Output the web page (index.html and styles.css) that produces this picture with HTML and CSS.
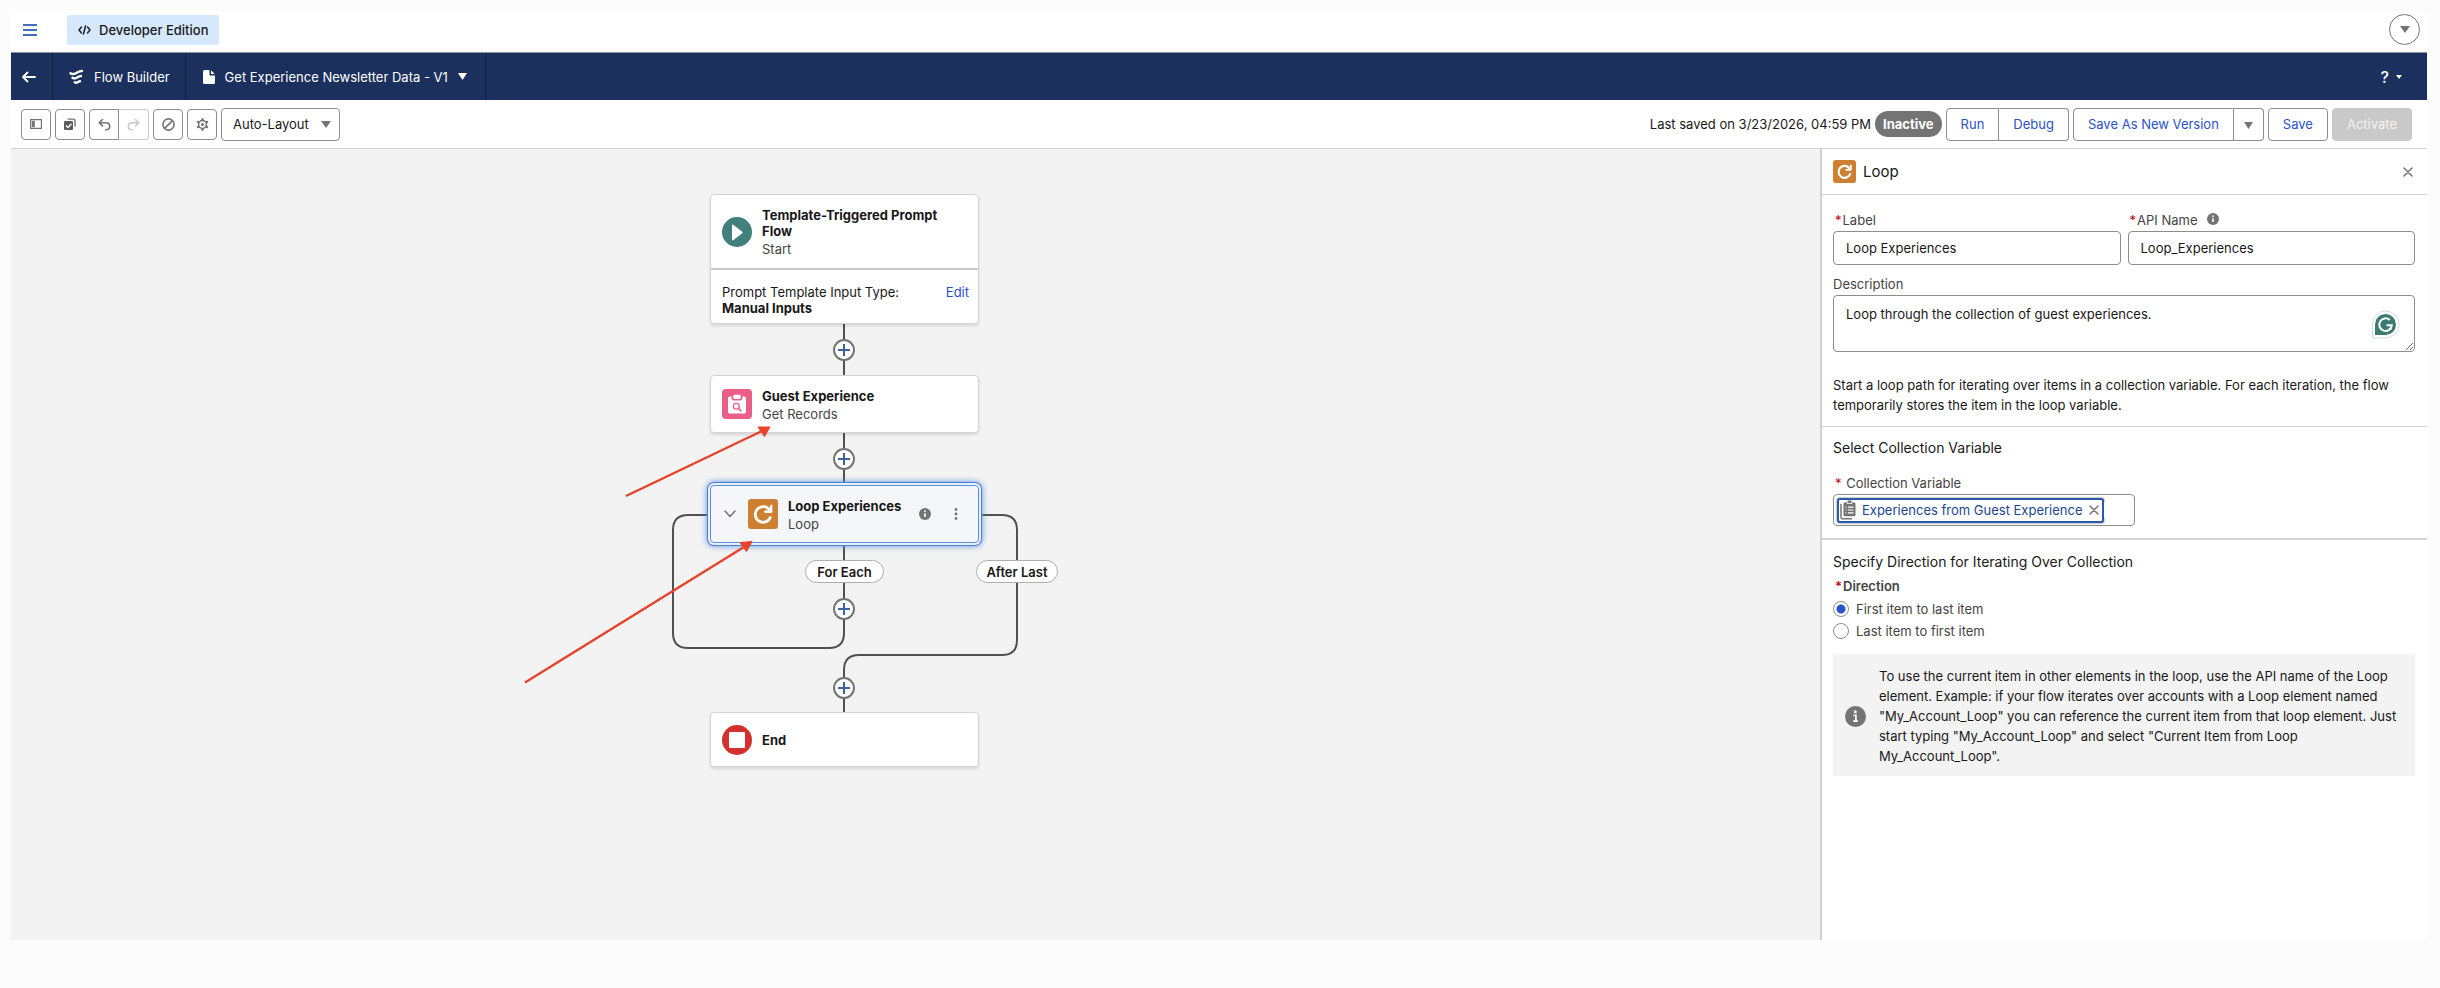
FILE: index.html
```html
<!DOCTYPE html>
<html lang="en">
<head>
  <meta charset="UTF-8">
  <title>Flow Builder</title>
  <link rel="stylesheet" href="styles.css">
</head>
<body>
  <div class="app">
    <div class="topbar">
      <button class="plain menu-button" aria-label="Menu">
        <svg width="14" height="12" viewBox="0 0 14 12"><path d="M0 1h14M0 6h14M0 11h14" stroke="#3f6fbd" stroke-width="2"/></svg>
      </button>
      <span class="edition">
        <svg width="13" height="10" viewBox="0 0 13 10" fill="none" stroke="#222" stroke-width="1.5" stroke-linecap="round" stroke-linejoin="round"><path d="M3.5 2L1 5l2.500 3M9.500 2L12 5l-2.500 3M7.500 1L5.500 9"/></svg>
        Developer Edition
      </span>
      <button class="user-menu" aria-label="User menu">
        <svg width="10" height="7" viewBox="0 0 10 7"><path d="M0 0h10L5 7z" fill="#747474"/></svg>
      </button>
    </div>

    <header class="nav">
      <a href="#" class="nav-item nav-back" aria-label="Back">
        <svg width="14" height="12" viewBox="0 0 14 12" fill="none" stroke="#fff" stroke-width="1.800" stroke-linecap="round" stroke-linejoin="round"><path d="M13 6H1.500M5.500 1.500L1 6l4.500 4.500"/></svg>
      </a>
      <div class="nav-item nav-app">
        <svg width="15" height="16" viewBox="0 0 15 16" fill="none" stroke="#fff" stroke-width="2.400" stroke-linecap="round"><path d="M1.500 4.200c2 1.600 3.600 1 5.500 0s3.500-2.300 6-2.200M3.500 8.700c1.400 1.100 2.700.8 4.100 0S10.400 7 12 7M5.800 13.200c1 .8 2 .6 3 0s1.400-1 2.200-1"/></svg>
        Flow Builder
      </div>
      <button class="nav-item nav-flow">
        <svg width="12" height="14" viewBox="0 0 12 14" fill="#fff"><path d="M1.500 0H6.500v4.500c0 .6.4 1 1 1H12v7c0 .8-.7 1.500-1.500 1.500h-9C.7 14 0 13.300 0 12.500v-11C0 .7.7 0 1.500 0z"/><path d="M8 .3L11.700 4H8.500c-.3 0-.5-.2-.5-.5z"/></svg>
        Get Experience Newsletter Data - V1
        <svg class="caret" width="9" height="7" viewBox="0 0 9 7"><path d="M0 0h9L4.500 7z" fill="#fff"/></svg>
      </button>
      <button class="nav-help" aria-label="Help">
        <span>?</span>
        <svg width="6" height="4" viewBox="0 0 6 4"><path d="M0 0h6L3 4z" fill="#fff"/></svg>
      </button>
    </header>

    <div class="toolbar">
      <button class="icon-button" aria-label="Toggle toolbox">
        <svg width="12" height="10" viewBox="0 0 12 10"><path d="M.6.600h10.800v8.800H.600z" fill="none" stroke="#747474" stroke-width="1.200"/><path d="M1.800 1.800h3v6.400h-3z" fill="#747474"/></svg>
      </button>
      <button class="icon-button" aria-label="Select elements">
        <svg width="12" height="12" viewBox="0 0 12 12"><path d="M3.500 1.100h6c.9 0 1.500.6 1.500 1.500v6" fill="none" stroke="#747474" stroke-width="1.400"/><rect y="3" width="9" height="9" rx="1.200" fill="#5c5c5c"/><path d="M2 7.500l2 2 3.500-3.700" fill="none" stroke="#fff" stroke-width="1.300"/></svg>
      </button>
      <div class="button-group">
        <button class="icon-button" aria-label="Undo">
          <svg width="13" height="13" viewBox="0 0 13 13" fill="none" stroke="#747474" stroke-width="1.600" stroke-linecap="round" stroke-linejoin="round"><path d="M4.500 1.500L1.200 4.700l3.300 3.200M1.500 4.700h6.200c2.400 0 4 1.500 4 3.500s-1.500 3.600-4 3.600"/></svg>
        </button>
        <button class="icon-button" aria-label="Redo" disabled>
          <svg width="13" height="13" viewBox="0 0 13 13" fill="none" stroke="#c9c9c9" stroke-width="1.600" stroke-linecap="round" stroke-linejoin="round"><path d="M8.500 1.500l3.300 3.200-3.300 3.200M11.500 4.700H5.300c-2.400 0-4 1.500-4 3.500s1.500 3.600 4 3.600"/></svg>
        </button>
      </div>
      <button class="icon-button" aria-label="Disable">
        <svg width="13" height="13" viewBox="0 0 13 13" fill="none" stroke="#747474" stroke-width="1.600"><circle cx="6.500" cy="6.500" r="5.600"/><path d="M10.400 2.600l-7.800 7.800"/></svg>
      </button>
      <button class="icon-button" aria-label="Settings">
        <svg width="13" height="13" viewBox="0 0 13 13" fill="none" stroke="#747474"><circle cx="6.500" cy="6.500" r="3.900" stroke-width="1.500"/><circle cx="6.500" cy="6.500" r="1.500" fill="#747474" stroke="none"/><path d="M6.500.300v2.400M6.500 10.300v2.400M1.100 3.400l2.100 1.200M9.800 8.400l2.100 1.200M1.100 9.600l2.100-1.200M9.800 4.600l2.100-1.200" stroke-width="2.300"/></svg>
      </button>
      <span class="select-wrap">
        <select aria-label="Layout mode">
          <option>Auto-Layout</option>
          <option>Free-Form</option>
        </select>
        <svg width="10" height="7" viewBox="0 0 10 7"><path d="M0 0h10L5 7z" fill="#747474"/></svg>
      </span>

      <div class="toolbar-right">
        <span class="saved">Last saved on 3/23/2026, 04:59 PM</span>
        <span class="status">Inactive</span>
        <div class="button-group">
          <button class="button">Run</button>
          <button class="button">Debug</button>
        </div>
        <div class="button-group">
          <button class="button">Save As New Version</button>
          <button class="button button-caret" aria-label="More save options">
            <svg width="9" height="7" viewBox="0 0 9 7"><path d="M0 0h9L4.500 7z" fill="#747474"/></svg>
          </button>
        </div>
        <button class="button">Save</button>
        <button class="button" disabled>Activate</button>
      </div>
    </div>

    <div class="workspace">
      <main class="canvas">
        <svg class="connectors" width="1100" height="640" viewBox="0 0 1100 640" fill="none" stroke="#515151" stroke-width="2">
          <path d="M833 174v54M833 283v52M833 393v91q0 15-15 15H677q-15 0-15-15V381q0-15 15-15H700"/>
          <path d="M966 366h25q15 0 15 15v110q0 15-15 15H848q-15 0-15 15v43"/>
        </svg>

        <div class="node start">
          <div class="node-head">
            <svg width="30" height="30" viewBox="0 0 30 30"><circle cx="15" cy="15" r="15" fill="#41807c"/><path d="M10 8.500c0-1 .5-1.200 1.200-.7l9 7c.6.500.6.900 0 1.400l-9 7c-.7.500-1.200.3-1.200-.7z" fill="#fff"/></svg>
            <div class="node-text">
              <h2>Template-Triggered Prompt Flow</h2>
              <p>Start</p>
            </div>
          </div>
          <div class="node-detail">
            <div>Prompt Template Input Type:<br><b>Manual Inputs</b></div>
            <a href="#">Edit</a>
          </div>
        </div>

        <div class="node get-records">
          <div class="node-head">
            <svg width="30" height="30" viewBox="0 0 30 30"><rect width="30" height="30" rx="4" fill="#ea5f8a"/><path d="M7.800 7.500h1.700v1.300c0 1.700 1.100 2.800 2.800 2.800h5.400c1.700 0 2.800-1.100 2.800-2.800V7.500h1.700c1 0 1.800.8 1.800 1.800v13.400c0 1-.8 1.800-1.800 1.800H7.800c-1 0-1.800-.8-1.800-1.800V9.300c0-1 .8-1.800 1.800-1.800z" fill="#fff"/><path d="M12.500 5.800h5c.7 0 1.200.5 1.200 1.200v1.800c0 .7-.5 1.200-1.200 1.200h-5c-.7 0-1.200-.5-1.200-1.200V7c0-.7.5-1.200 1.200-1.200z" fill="#fff"/><circle cx="14.300" cy="17.200" r="2.900" fill="none" stroke="#ea5f8a" stroke-width="1.300"/><path d="M16.500 19.400l2.500 2.500" stroke="#ea5f8a" stroke-width="1.500" stroke-linecap="round"/></svg>
            <div class="node-text">
              <h2>Guest Experience</h2>
              <p>Get Records</p>
            </div>
          </div>
        </div>

        <div class="node loop">
          <div class="node-head">
            <button class="plain" aria-label="Collapse"><svg width="12" height="8" viewBox="0 0 12 8" fill="none" stroke="#747474" stroke-width="1.500" stroke-linecap="round" stroke-linejoin="round"><path d="M1 1l5 5.500L11 1"/></svg></button>
            <svg width="30" height="30" viewBox="0 0 30 30"><rect width="30" height="30" rx="3" fill="#cd8032"/><path d="M22.300 18.500a7.800 7.800 0 1 1-.6-7.200" fill="none" stroke="#fff" stroke-width="2.800" stroke-linecap="round"/><path d="M23.200 7v5.800H17.300" fill="none" stroke="#fff" stroke-width="2.400" stroke-linecap="round" stroke-linejoin="round"/></svg>
            <div class="node-text">
              <h2>Loop Experiences</h2>
              <p>Loop</p>
            </div>
            <svg width="12" height="12" viewBox="0 0 12 12"><circle cx="6" cy="6" r="6" fill="#747474"/><path d="M6 2.400v1.500M6 5.200V9" stroke="#fff" stroke-width="1.600"/></svg>
            <button class="plain" aria-label="Element actions"><svg width="4" height="12" viewBox="0 0 4 12" fill="#747474"><circle cx="2" cy="1.500" r="1.400"/><circle cx="2" cy="6" r="1.400"/><circle cx="2" cy="10.500" r="1.400"/></svg></button>
          </div>
        </div>

        <div class="node end">
          <div class="node-head">
            <svg width="30" height="30" viewBox="0 0 30 30"><circle cx="15" cy="15" r="15" fill="#d4302f"/><rect x="7" y="7" width="16" height="16" rx="1" fill="#fff"/></svg>
            <h2>End</h2>
          </div>
        </div>

        <span class="branch for-each">For Each</span>
        <span class="branch after-last">After Last</span>

        <button class="add add-1" aria-label="Add element"></button>
        <button class="add add-2" aria-label="Add element"></button>
        <button class="add add-3" aria-label="Add element"></button>
        <button class="add add-4" aria-label="Add element"></button>

        <svg class="arrows" width="1100" height="640" viewBox="0 0 1100 640" fill="#e8432a" stroke="#e8432a" stroke-width="2.400">
          <path d="M615 347l136-65M514 533.500L733 398"/>
          <path d="M759 278h-12l6.500 9.500zM741 392.500l-12 1 6.500 9z" stroke-width="1"/>
        </svg>
      </main>

      <aside class="panel">
        <div class="panel-head">
          <svg width="23" height="23" viewBox="0 0 30 30"><rect width="30" height="30" rx="4" fill="#cd8032"/><path d="M22.300 18.500a7.800 7.800 0 1 1-.6-7.200" fill="none" stroke="#fff" stroke-width="2.800" stroke-linecap="round"/><path d="M23.200 7v5.800H17.300" fill="none" stroke="#fff" stroke-width="2.400" stroke-linecap="round" stroke-linejoin="round"/></svg>
          <h2>Loop</h2>
          <button class="plain" aria-label="Close"><svg width="10" height="10" viewBox="0 0 10 10" stroke="#747474" stroke-width="1.500" stroke-linecap="round"><path d="M1 1l8 8M9 1L1 9"/></svg></button>
        </div>

        <div class="section general">
          <div class="field-row">
            <div class="field">
              <label for="label"><i>*</i>Label</label>
              <input type="text" id="label" value="Loop Experiences">
            </div>
            <div class="field">
              <label for="api-name"><i>*</i>API Name
                <svg class="info" width="12" height="12" viewBox="0 0 12 12"><circle cx="6" cy="6" r="6" fill="#747474"/><path d="M6 2.400v1.500M6 5.200V9" stroke="#fff" stroke-width="1.600"/></svg>
              </label>
              <input type="text" id="api-name" value="Loop_Experiences">
            </div>
          </div>
          <div class="field description">
            <label for="description">Description</label>
            <textarea id="description">Loop through the collection of guest experiences.</textarea>
            <svg class="grammar" width="29" height="29" viewBox="0 0 29 29"><path d="M14.500 1A13.500 13.500 0 1 1 14.500 28H1.500V14A13.500 13.500 0 0 1 14.500 1z" fill="#fff" stroke="#d5dae3"/><path d="M14.500 4A10.500 10.500 0 1 1 14.500 25H4V14.500A10.500 10.500 0 0 1 14.500 4z" fill="#3c7b70"/><path d="M18.800 10a6.300 6.300 0 1 0 2 5.200H15.500M20.800 15.200l-1.300 4.300" fill="none" stroke="#fff" stroke-width="2"/></svg>
          </div>
          <p class="intro">Start a loop path for iterating over items in a collection variable. For each iteration, the flow temporarily stores the item in the loop variable.</p>
        </div>

        <div class="section collection">
          <h3>Select Collection Variable</h3>
          <label for="collection"><i>*</i> Collection Variable</label>
          <div class="combo">
            <button class="resource">
              <svg width="16" height="20" viewBox="0 0 16 20"><path d="M1 4v13.500c0 .8.5 1.300 1.300 1.300H12" fill="none" stroke="#747474" stroke-width="1.500"/><path d="M5 2.500h2V4h5V2.500h2c.8 0 1.500.6 1.500 1.400v11c0 .8-.7 1.400-1.500 1.400H5c-.8 0-1.500-.6-1.500-1.400v-11c0-.8.7-1.400 1.500-1.400z" fill="#747474"/><path d="M7.500.500h4v2.700h-4z" fill="#747474"/><path d="M5.500 7.200h1M8 7.200h5.500M5.500 10h1M8 10h5.500M5.500 12.800h1M8 12.800h5.500" stroke="#fff" stroke-width="1.200"/></svg>
              Experiences from Guest Experience
              <svg class="remove" width="10" height="10" viewBox="0 0 10 10" stroke="#747474" stroke-width="1.500" stroke-linecap="round"><path d="M1 1l8 8M9 1L1 9"/></svg>
            </button>
            <input type="text" id="collection">
          </div>
        </div>

        <div class="section direction">
          <h3>Specify Direction for Iterating Over Collection</h3>
          <fieldset>
            <legend><i>*</i>Direction</legend>
            <label><input type="radio" name="direction" checked>First item to last item</label>
            <label><input type="radio" name="direction">Last item to first item</label>
          </fieldset>
          <div class="notice">
            <svg width="21" height="21" viewBox="0 0 21 21"><circle cx="10.500" cy="10.500" r="10.500" fill="#747474"/><circle cx="10.300" cy="5.800" r="1.500" fill="#fff"/><path d="M8.500 9.300h2.400v5.500M8.200 15.200h4.800" fill="none" stroke="#fff" stroke-width="1.700"/></svg>
            <p>To use the current item in other elements in the loop, use the API name of the Loop element. Example: if your flow iterates over accounts with a Loop element named "My_Account_Loop" you can reference the current item from that loop element. Just start typing "My_Account_Loop" and select "Current Item from Loop My_Account_Loop".</p>
          </div>
        </div>
      </aside>
    </div>
  </div>
</body>
</html>
```
FILE: styles.css
```css
* {
  margin: 0;
  padding: 0;
  box-sizing: border-box;
}

body {
  min-height: 100vh;
  padding: 11px 13px 48px 11px;
  background: #fcfcfc;
  color: #181818;
  font-family: Inter, "Liberation Sans", sans-serif;
  font-size: 13px;
  line-height: 16px;
  display: flex;
}

button,
input,
select,
textarea {
  font: inherit;
  color: inherit;
}

button {
  cursor: pointer;
}

svg {
  flex: none;
}

a {
  color: #2a52cc;
  text-decoration: none;
}

.app {
  flex: 1;
  min-width: 0;
  display: flex;
  flex-direction: column;
  background: #fff;
}

.plain {
  border: none;
  background: none;
  display: flex;
}

/* Top bar */
.topbar {
  height: 42px;
  display: flex;
  align-items: center;
  padding: 0 7px 4px 12px;
  border-bottom: 1px solid #8d9299;
}

.edition {
  display: flex;
  align-items: center;
  gap: 8px;
  height: 30px;
  margin: 0 auto 0 30px;
  padding: 0 11px;
  background: #d5e8fc;
  border-radius: 2px;
  font-weight: 500;
}

.user-menu {
  width: 31px;
  height: 31px;
  display: flex;
  align-items: center;
  justify-content: center;
  background: #fff;
  border: 1px solid #747474;
  border-radius: 50%;
}

/* Navigation */
.nav {
  display: flex;
  height: 47px;
  background: #1b305c;
  color: #fff;
}

.nav-item {
  display: flex;
  align-items: center;
  border: none;
  border-right: 1px solid #12213f;
  background: none;
  color: #fff;
}

.nav-back {
  padding: 0 16px 0 11px;
}

.nav-app {
  gap: 10px;
  padding: 0 15px 0 16px;
}

.nav-flow {
  gap: 10px;
  padding: 0 18px 0 17px;
}

.nav-help {
  display: flex;
  align-items: center;
  gap: 7px;
  margin-left: auto;
  padding: 0 25px;
  border: none;
  background: none;
  color: #fff;
  font-size: 16px;
  font-weight: 500;
}

/* Toolbar */
.toolbar {
  display: flex;
  align-items: center;
  gap: 4px;
  height: 49px;
  padding: 0 15px 0 10px;
  border-bottom: 1px solid #d4d4d4;
}

.icon-button {
  display: flex;
  align-items: center;
  justify-content: center;
  width: 30px;
  height: 31px;
  background: #fff;
  border: 1px solid #8d8d8d;
  border-radius: 4px;
}

.icon-button:disabled {
  border-color: #c9c9c9;
}

.button-group {
  display: flex;
}

.button-group > :first-child {
  border-radius: 4px 0 0 4px;
}

.button-group > :last-child {
  border-left: none;
  border-radius: 0 4px 4px 0;
}

.select-wrap {
  display: grid;
  align-items: center;
}

.select-wrap select,
.select-wrap svg {
  grid-area: 1 / 1;
}

.select-wrap select {
  appearance: none;
  width: 119px;
  height: 33px;
  padding-left: 11px;
  background: #fff;
  border: 1px solid #8d8d8d;
  border-radius: 4px;
}

.select-wrap svg {
  justify-self: end;
  margin-right: 9px;
  pointer-events: none;
}

.toolbar-right {
  display: flex;
  align-items: center;
  gap: 4px;
  margin-left: auto;
}

.status {
  height: 26px;
  padding: 0 8px;
  border-radius: 13px;
  background: #747474;
  color: #fff;
  font-weight: 700;
  line-height: 26px;
}

.button {
  height: 33px;
  padding: 0 14px;
  background: #fff;
  border: 1px solid #8d8d8d;
  border-radius: 4px;
  color: #2a52cc;
}

.button-caret {
  padding: 0 10px;
}

.button:disabled {
  background: #c9c9c9;
  border-color: #c9c9c9;
  color: #f3f3f3;
}

/* Canvas */
.workspace {
  flex: 1;
  display: flex;
}

.canvas {
  position: relative;
  flex: 1;
  overflow: hidden;
  background: #f3f3f3;
}

.connectors,
.arrows {
  position: absolute;
  top: 0;
  left: 0;
  pointer-events: none;
}

.node {
  position: absolute;
  left: 699px;
  width: 269px;
  background: #fff;
  border: 1px solid #d4d4d4;
  border-radius: 4px;
  box-shadow: 0 2px 3px rgba(0, 0, 0, 0.12);
}

.node h2 {
  font-size: 13px;
  font-weight: 700;
}

.node p {
  line-height: 20px;
  color: #444;
}

.node-head {
  display: flex;
  align-items: center;
  gap: 10px;
  height: 56px;
  padding: 0 11px;
}

.node-text {
  flex: 1;
  padding-top: 3px;
}

.start { top: 45px; }
.get-records { top: 226px; }
.loop { top: 336px; }
.end { top: 563px; }

.start .node-head {
  height: 75px;
  border-bottom: 2px solid #c9c9c9;
}

.node-detail {
  display: flex;
  justify-content: space-between;
  padding: 14px 9px 7px 11px;
}

.node-detail b {
  font-weight: 700;
}

.loop {
  background: #f4f6f9;
  border-color: #5c8fdd;
  box-shadow: 0 0 0 2px #e8f0fc, 0 0 0 3px #4a80d6, 0 0 6px 3px #5c8fdd;
}

.loop .node-head {
  padding: 0 20px 0 13px;
}

.loop .plain + svg {
  margin-left: 2px;
}

.loop svg + .plain {
  margin-left: 13px;
}

.end .node-head {
  height: 53px;
}

.branch {
  position: absolute;
  top: 411px;
  height: 23px;
  border: 1px solid #aeaeae;
  border-radius: 12px;
  background: #fff;
  font-weight: 600;
  line-height: 22px;
  text-align: center;
}

.for-each {
  left: 794px;
  width: 79px;
}

.after-last {
  left: 965px;
  width: 82px;
}

.add {
  position: absolute;
  left: 822px;
  width: 22px;
  height: 22px;
  border: 2px solid #747474;
  border-radius: 50%;
  background:
    linear-gradient(#3d62a0, #3d62a0) center / 12px 2px no-repeat,
    linear-gradient(#3d62a0, #3d62a0) center / 2px 12px no-repeat,
    #fff;
}

.add-1 { top: 190px; }
.add-2 { top: 299px; }
.add-3 { top: 449px; }
.add-4 { top: 528px; }

/* Properties panel */
.panel {
  width: 607px;
  border-left: 2px solid #d0d0d0;
  background: #fff;
}

.panel-head {
  display: flex;
  align-items: center;
  gap: 7px;
  height: 46px;
  padding: 0 14px 0 11px;
  border-bottom: 1px solid #d4d4d4;
}

.panel-head h2 {
  flex: 1;
  font-size: 15px;
  font-weight: 400;
}

.section {
  padding: 0 12px 0 11px;
  border-bottom: 1px solid #d4d4d4;
}

.section h3 {
  font-size: 14px;
  font-weight: 400;
  line-height: 20px;
}

.section label {
  color: #444;
}

.section i {
  color: #ba0517;
  font-style: normal;
  margin: 0 1px 0 2px;
}

.general {
  padding-top: 17px;
  padding-bottom: 11px;
}

.field-row {
  display: flex;
  gap: 7px;
}

.field {
  flex: 1;
  position: relative;
}

.field label {
  display: block;
  height: 19px;
}

.info {
  margin-left: 6px;
}

.field input,
.field textarea {
  display: block;
  width: 100%;
  height: 34px;
  padding: 0 12px;
  background: #fff;
  border: 1px solid #8d8d8d;
  border-radius: 4px;
}

.description {
  margin-top: 11px;
}

.field textarea {
  height: 57px;
  padding: 10px 12px;
}

.grammar {
  position: absolute;
  right: 15px;
  bottom: 13px;
}

.intro {
  margin-top: 23px;
  line-height: 20px;
}

.collection {
  padding-top: 11px;
  padding-bottom: 12px;
  border-bottom-width: 2px;
}

.collection label {
  display: block;
  margin: 17px 0 3px;
}

.combo {
  display: flex;
  align-items: center;
  width: 302px;
  height: 32px;
  padding-left: 3px;
  border: 1px solid #8d8d8d;
  border-radius: 4px;
}

.combo input {
  flex: 1;
  min-width: 0;
  border: none;
  outline: none;
}

.resource {
  display: flex;
  align-items: center;
  gap: 6px;
  height: 25px;
  padding: 0 3px 0 1px;
  border: 2px solid #2b5aa8;
  border-radius: 3px;
  background: #fff;
  box-shadow: 0 0 2px #555;
  color: #1b4790;
  white-space: nowrap;
}

.direction {
  padding-top: 12px;
  border: none;
}

fieldset {
  margin-top: 6px;
  border: none;
}

legend {
  margin-bottom: 4px;
  color: #444;
  font-weight: 600;
}

.direction label {
  display: flex;
  align-items: center;
  gap: 7px;
  height: 22px;
}

.direction input {
  appearance: none;
  width: 16px;
  height: 16px;
  border: 1px solid #8d8d8d;
  border-radius: 50%;
}

.direction input:checked {
  background: radial-gradient(circle, #2a52cc 4px, #fff 5px);
}

.notice {
  display: flex;
  align-items: center;
  gap: 13px;
  margin-top: 12px;
  padding: 12px 12px 10px;
  background: #f3f3f3;
}

.notice p {
  line-height: 20px;
}
```
